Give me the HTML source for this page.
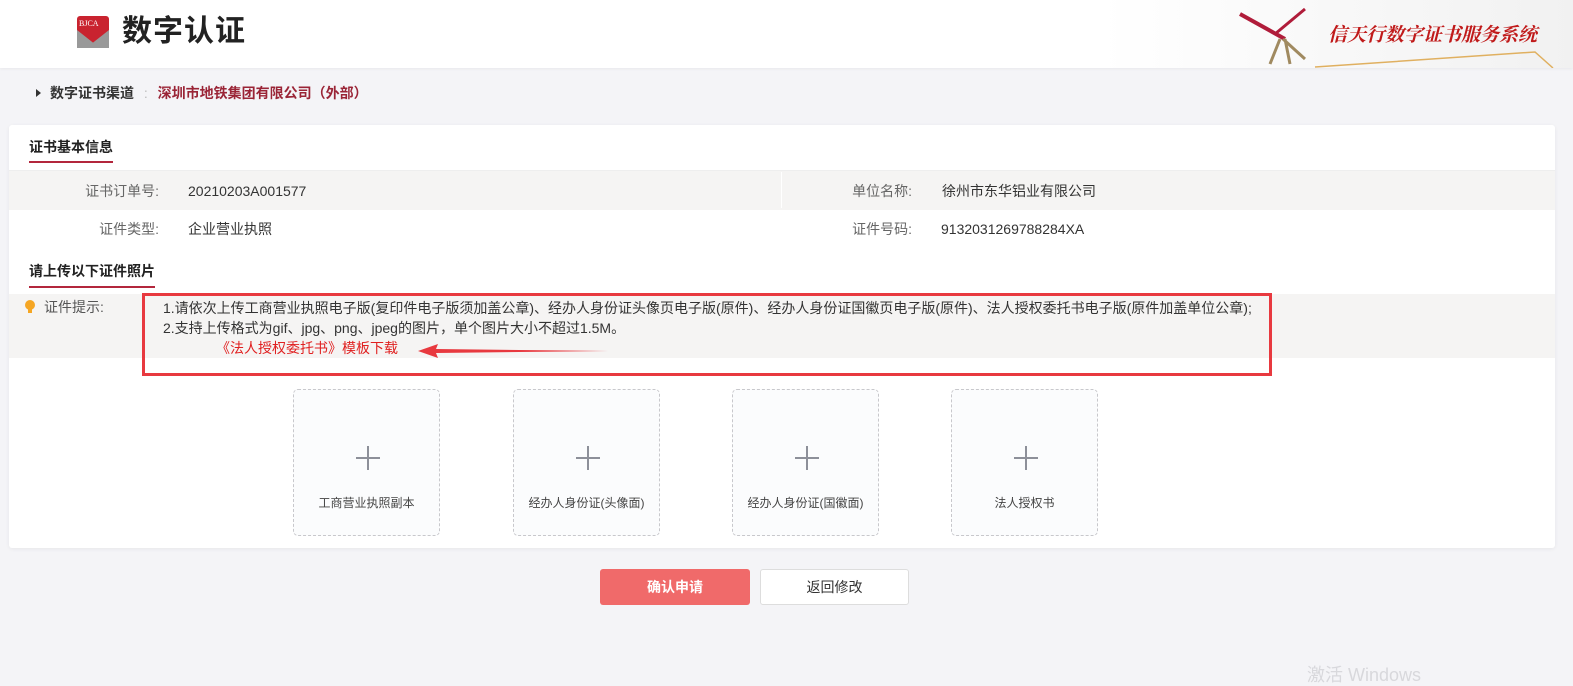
<!DOCTYPE html>
<html><head><meta charset="utf-8"><style>
*{margin:0;padding:0;box-sizing:border-box}
body{width:1573px;height:676px;background:#f4f4f7;font-family:"Liberation Sans","Noto Sans CJK SC",sans-serif;font-size:14px;color:#333;position:relative;overflow:hidden}
.abs{position:absolute;line-height:18px}
.hdr{left:0;top:0;width:1573px;height:68px;background:linear-gradient(90deg,#fff 70%,#f1f1f1 100%);box-shadow:0 1px 3px rgba(0,0,0,.05)}
.card{left:9px;top:125px;width:1546px;height:423px;background:#fff;border-radius:3px;box-shadow:0 1px 4px rgba(0,0,0,.06)}
.row{left:9px;width:1546px;height:40px}
.lbl{color:#666;text-align:right;width:130px}
.up{width:147px;height:147px;border:1px dashed #c8c8cc;border-radius:5px;background:#fbfcfd;top:389px}
.up .p1{position:absolute;left:62px;top:67px;width:24px;height:2px;background:#8d9099}
.up .p2{position:absolute;left:73px;top:56px;width:2px;height:24px;background:#8d9099}
.up span{position:absolute;left:0;right:0;top:104px;text-align:center;font-size:12px;color:#444}
</style></head><body>
<div class="abs hdr"></div>
<div class="abs" style="left:77px;top:16px;width:32px;height:32px;background:#c9232f;border-radius:3px 3px 0 0"></div>
<div class="abs" style="left:77px;top:30px;width:32px;height:18px;background:#999;clip-path:polygon(0 0,50% 70%,100% 0,100% 100%,0 100%)"></div>
<div class="abs" style="left:79px;top:19px;font-size:8px;color:#fff;font-family:'Liberation Serif',serif;line-height:10px">BJCA</div>
<div class="abs" style="left:122px;top:14px;font-size:30px;line-height:36px;color:#222;letter-spacing:1px;font-weight:bold">数字认证</div>
<div class="abs" style="left:1328px;top:24px;font-size:19px;line-height:24px;color:#c01a1a;font-style:italic;font-weight:bold;font-family:'Liberation Serif','Noto Serif CJK SC',serif">信天行数字证书服务系统</div>
<svg class="abs" style="left:1235px;top:4px" width="330" height="64"><path d="M5 10 L50 35" stroke="#b01c3a" stroke-width="4"/><path d="M40 30 L70 5" stroke="#b01c3a" stroke-width="3"/><path d="M45 35 L35 60 M50 35 L55 60 M48 35 L70 55" stroke="#a08a60" stroke-width="3"/><path d="M80 63 L300 48 L318 64" stroke="#e0b060" stroke-width="1.5" fill="none"/></svg>
<div class="abs" style="left:36px;top:89px;width:0;height:0;border-left:5px solid #333;border-top:4px solid transparent;border-bottom:4px solid transparent"></div>
<div class="abs" style="left:50px;top:84px;font-weight:bold;color:#333">数字证书渠道 <span style="color:#bbb;font-weight:normal;margin:0 6px">:</span> <span style="color:#9a2436">深圳市地铁集团有限公司（外部）</span></div>
<div class="abs card"></div>
<div class="abs" style="left:29px;top:138px;font-weight:bold;color:#222">证书基本信息</div>
<div class="abs" style="left:29px;top:161px;width:84px;height:2px;background:#b3263c"></div>
<div class="abs row" style="top:170px;background:#f5f4f3;border-top:1px solid #eee"></div>
<div class="abs" style="left:781px;top:172px;width:1px;height:36px;background:#fff"></div>
<div class="abs lbl" style="left:29px;top:182px">证书订单号:</div>
<div class="abs" style="left:188px;top:182px">20210203A001577</div>
<div class="abs lbl" style="left:782px;top:182px">单位名称:</div>
<div class="abs" style="left:942px;top:182px">徐州市东华铝业有限公司</div>
<div class="abs lbl" style="left:29px;top:220px">证件类型:</div>
<div class="abs" style="left:188px;top:220px">企业营业执照</div>
<div class="abs lbl" style="left:782px;top:220px">证件号码:</div>
<div class="abs" style="left:941px;top:220px">9132031269788284XA</div>
<div class="abs" style="left:29px;top:262px;font-weight:bold;color:#222">请上传以下证件照片</div>
<div class="abs" style="left:29px;top:286px;width:126px;height:2px;background:#b3263c"></div>
<div class="abs row" style="top:294px;height:64px;background:#f5f4f3"></div>
<div class="abs" style="left:25px;top:300px;width:10px;height:10px;border-radius:50%;background:#f5a623"></div>
<div class="abs" style="left:28px;top:309px;width:4px;height:4px;background:#f5a623"></div>
<div class="abs" style="left:44px;top:298px;color:#555">证件提示:</div>
<div class="abs" style="left:163px;top:298px;line-height:20px;color:#333">1.请依次上传工商营业执照电子版(复印件电子版须加盖公章)、经办人身份证头像页电子版(原件)、经办人身份证国徽页电子版(原件)、法人授权委托书电子版(原件加盖单位公章);<br>2.支持上传格式为gif、jpg、png、jpeg的图片，单个图片大小不超过1.5M。</div>
<div class="abs" style="left:216px;top:339px;color:#e02020;font-size:14px">《法人授权委托书》模板下载</div>
<svg class="abs" style="left:418px;top:342px" width="192" height="18"><path d="M0 9 L20 2 L18 7 L190 9 L18 11 L20 16 Z" fill="#e8393f"/></svg>
<div class="abs" style="left:142px;top:293px;width:1130px;height:83px;border:3px solid #e8393f"></div>
<div class="abs up" style="left:293px"><i class="p1"></i><i class="p2"></i><span>工商营业执照副本</span></div>
<div class="abs up" style="left:513px"><i class="p1"></i><i class="p2"></i><span>经办人身份证(头像面)</span></div>
<div class="abs up" style="left:732px"><i class="p1"></i><i class="p2"></i><span>经办人身份证(国徽面)</span></div>
<div class="abs up" style="left:951px"><i class="p1"></i><i class="p2"></i><span>法人授权书</span></div>
<div class="abs" style="left:600px;top:569px;width:150px;height:36px;background:#f06a6a;border-radius:3px;color:#fff;text-align:center;line-height:36px;font-weight:bold">确认申请</div>
<div class="abs" style="left:760px;top:569px;width:149px;height:36px;background:#fff;border:1px solid #ddd;border-radius:3px;color:#333;text-align:center;line-height:34px">返回修改</div>
<div class="abs" style="left:1307px;top:664px;color:#d8d8dc;font-size:18px;line-height:22px">激活 Windows</div>
</body></html>
